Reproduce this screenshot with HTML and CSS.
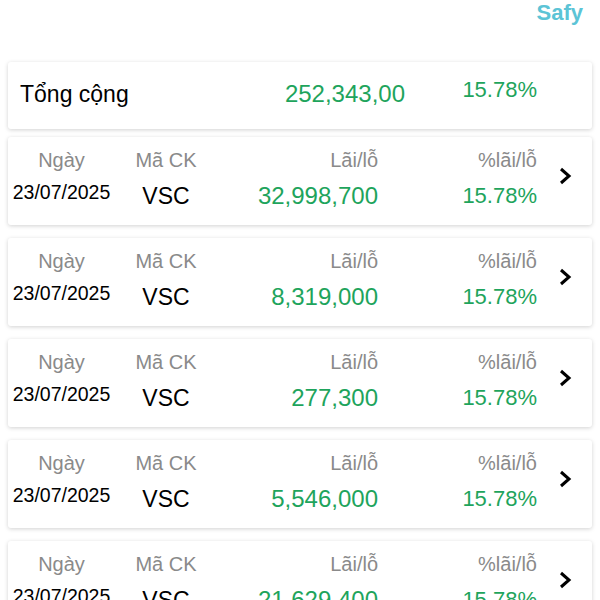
FILE: index.html
```html
<!DOCTYPE html>
<html lang="vi">
<head>
  <meta charset="UTF-8">
  <title>Safy - Lãi/lỗ</title>
  <link rel="stylesheet" href="styles.css">
</head>
<body>
  <header class="top">
    <span class="brand">Safy</span>
  </header>

  <div class="card total">
    <div class="total-label">Tổng cộng</div>
    <div class="total-value">252,343,00</div>
    <div class="total-pct">15.78%</div>
  </div>

  <div class="list">
    <div class="card row">
      <div class="cols">
        <div class="cell c-date"><span class="lbl">Ngày</span><span class="val date">23/07/2025</span></div>
        <div class="cell c-code"><span class="lbl">Mã CK</span><span class="val">VSC</span></div>
        <div class="cell c-pl"><span class="lbl">Lãi/lỗ</span><span class="val green">32,998,700</span></div>
        <div class="cell c-pct"><span class="lbl">%lãi/lỗ</span><span class="val green">15.78%</span></div>
      </div>
      <svg class="chev" width="14" height="18" viewBox="0 0 14 18"><path d="M3 2 L11 9 L3 16" fill="none" stroke="#000" stroke-width="3"/></svg>
    </div>

    <div class="card row">
      <div class="cols">
        <div class="cell c-date"><span class="lbl">Ngày</span><span class="val date">23/07/2025</span></div>
        <div class="cell c-code"><span class="lbl">Mã CK</span><span class="val">VSC</span></div>
        <div class="cell c-pl"><span class="lbl">Lãi/lỗ</span><span class="val green">8,319,000</span></div>
        <div class="cell c-pct"><span class="lbl">%lãi/lỗ</span><span class="val green">15.78%</span></div>
      </div>
      <svg class="chev" width="14" height="18" viewBox="0 0 14 18"><path d="M3 2 L11 9 L3 16" fill="none" stroke="#000" stroke-width="3"/></svg>
    </div>

    <div class="card row">
      <div class="cols">
        <div class="cell c-date"><span class="lbl">Ngày</span><span class="val date">23/07/2025</span></div>
        <div class="cell c-code"><span class="lbl">Mã CK</span><span class="val">VSC</span></div>
        <div class="cell c-pl"><span class="lbl">Lãi/lỗ</span><span class="val green">277,300</span></div>
        <div class="cell c-pct"><span class="lbl">%lãi/lỗ</span><span class="val green">15.78%</span></div>
      </div>
      <svg class="chev" width="14" height="18" viewBox="0 0 14 18"><path d="M3 2 L11 9 L3 16" fill="none" stroke="#000" stroke-width="3"/></svg>
    </div>

    <div class="card row">
      <div class="cols">
        <div class="cell c-date"><span class="lbl">Ngày</span><span class="val date">23/07/2025</span></div>
        <div class="cell c-code"><span class="lbl">Mã CK</span><span class="val">VSC</span></div>
        <div class="cell c-pl"><span class="lbl">Lãi/lỗ</span><span class="val green">5,546,000</span></div>
        <div class="cell c-pct"><span class="lbl">%lãi/lỗ</span><span class="val green">15.78%</span></div>
      </div>
      <svg class="chev" width="14" height="18" viewBox="0 0 14 18"><path d="M3 2 L11 9 L3 16" fill="none" stroke="#000" stroke-width="3"/></svg>
    </div>

    <div class="card row">
      <div class="cols">
        <div class="cell c-date"><span class="lbl">Ngày</span><span class="val date">23/07/2025</span></div>
        <div class="cell c-code"><span class="lbl">Mã CK</span><span class="val">VSC</span></div>
        <div class="cell c-pl"><span class="lbl">Lãi/lỗ</span><span class="val green">21,629,400</span></div>
        <div class="cell c-pct"><span class="lbl">%lãi/lỗ</span><span class="val green">15.78%</span></div>
      </div>
      <svg class="chev" width="14" height="18" viewBox="0 0 14 18"><path d="M3 2 L11 9 L3 16" fill="none" stroke="#000" stroke-width="3"/></svg>
    </div>
  </div>
</body>
</html>
```

FILE: styles.css
```css
* {
  margin: 0;
  padding: 0;
  box-sizing: border-box;
  font-family: 'Liberation Sans', Arial, sans-serif;
}
body {
  background: #fff;
  color: #000;
  padding: 0 8px;
  height: 600px;
  overflow: hidden;
}
.top {
  display: flex;
  justify-content: flex-end;
  height: 62px;
  padding: 0 9px 0 0;
}
.brand {
  color: #5cc4d6;
  font-weight: bold;
  font-size: 22px;
}
.card {
  background: #fff;
  border-radius: 3px;
  box-shadow: 0 1px 4px rgba(0, 0, 0, 0.18);
}
.total {
  display: flex;
  align-items: center;
  height: 67px;
  padding: 0 55px 0 12px;
}
.total-label {
  font-size: 23px;
  flex: 1;
  margin-top: -3px;
}
.total-value {
  font-size: 24px;
  color: #1ea45c;
  margin-top: -3px;
}
.total-pct {
  font-size: 22px;
  color: #1ea45c;
  width: 132px;
  text-align: right;
  margin-top: -11px;
}
.list {
  display: flex;
  flex-direction: column;
  gap: 13px;
  margin-top: 8px;
}
.row {
  display: flex;
  align-items: center;
  height: 88px;
  padding: 0 20px 0 0;
}
.cols {
  flex: 1;
  display: grid;
  grid-template-columns: 107px 102px 161px 159px;
  margin-top: -4px;
}
.cell {
  display: flex;
  flex-direction: column;
  gap: 10px;
}
.c-date, .c-code {
  align-items: center;
}
.c-pl, .c-pct {
  align-items: flex-end;
}
.lbl {
  color: #8a8a8a;
  font-size: 20px;
  line-height: 24px;
}
.val {
  font-size: 23px;
  line-height: 28px;
}
.c-pl .val {
  font-size: 24px;
}
.c-pct .val {
  font-size: 22px;
}
.date {
  font-size: 19.5px;
  margin-top: -4px;
}
.green {
  color: #1ea45c;
}
.chev {
  margin-left: 19px;
  margin-top: -10px;
}
```
